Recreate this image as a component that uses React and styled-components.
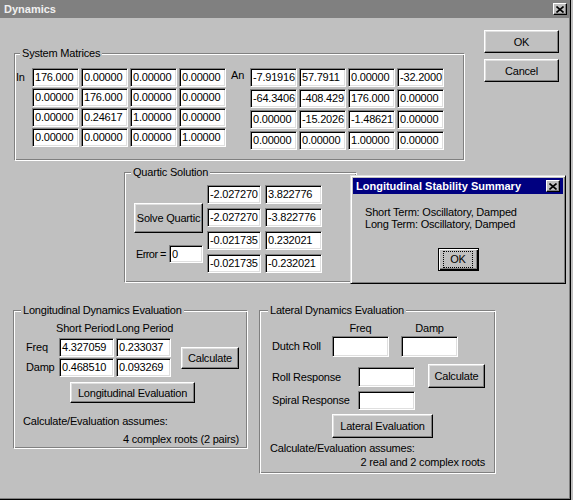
import React from "react";
import styled, { createGlobalStyle } from "styled-components";

const GlobalStyle = createGlobalStyle`
  html, body {
    margin: 0;
    padding: 0;
    background: #c0c0c0;
  }
  body {
    font-family: "Liberation Sans", Arial, sans-serif;
    font-size: 11px;
    letter-spacing: -0.2px;
    color: #000;
  }
  * {
    box-sizing: border-box;
  }
`;

const Window = styled.div`
  position: relative;
  width: 571px;
  height: 500px;
  background: #c0c0c0;
  border-right: 1px solid #000;
  border-bottom: 1px solid #000;
  box-shadow: inset -1px -1px #808080;
  overflow: hidden;
`;

const TitleBar = styled.div`
  display: flex;
  align-items: center;
  justify-content: space-between;
  height: ${(p) => p.$h || 18}px;
  padding: 0 ${(p) => p.$pr || 3}px 0 ${(p) => p.$pl || 4}px;
  background: ${(p) => (p.$active ? "#000080" : "#808080")};
  color: ${(p) => (p.$active ? "#fff" : "#f0f0f0")};
  font-weight: bold;
  font-size: 11px;
  letter-spacing: 0;
  white-space: nowrap;
`;

const CloseBox = styled.div`
  width: 14px;
  height: 12px;
  display: flex;
  align-items: center;
  justify-content: center;
  background: #c0c0c0;
  border: 1px solid;
  border-color: #fff #000 #000 #fff;
  box-shadow: inset -1px -1px #808080;
`;

const CloseButton = () => (
  <CloseBox>
    <svg width="8" height="7" viewBox="0 0 8 7">
      <path d="M0.5 0.5 L7.5 6.5 M7.5 0.5 L0.5 6.5" stroke="#000" strokeWidth="1.6" />
    </svg>
  </CloseBox>
);

const Body = styled.div`
  display: flex;
  flex-direction: column;
  align-items: flex-start;
`;

const Row = styled.div`
  display: flex;
  flex-direction: ${(p) => p.$dir || "row"};
  align-items: ${(p) => p.$align || "flex-start"};
  justify-content: ${(p) => p.$justify || "flex-start"};
  margin: ${(p) => p.$m || 0};
  gap: ${(p) => p.$gap || 0}px;
`;

const Group = styled.fieldset`
  margin: ${(p) => p.$m || 0};
  padding: 0;
  width: ${(p) => p.$w}px;
  height: ${(p) => p.$h}px;
  min-width: 0;
  border: 1px solid;
  border-color: #808080 #fff #fff #808080;
  box-shadow: inset 1px 1px #fff, inset -1px -1px #808080;
  flex-shrink: 0;
`;

const Legend = styled.legend`
  margin-left: ${(p) => p.$ml || 6}px;
  padding: 0 2px;
  line-height: 13px;
  font-size: 11px;
  background: #c0c0c0;
`;

const Content = styled.div`
  padding: ${(p) => p.$pad};
  display: flex;
  flex-direction: column;
  align-items: ${(p) => (p.$stretch ? "stretch" : "flex-start")};
`;

const Field = styled.div`
  width: ${(p) => p.$w}px;
  height: ${(p) => p.$h || 19}px;
  margin-left: ${(p) => p.$ml || 0}px;
  background: #fff;
  border: 1px solid;
  border-color: #808080 #fff #fff #808080;
  box-shadow: inset 1px 1px #000, inset -1px -1px #dfdfdf;
  padding: 0 0 0 2px;
  line-height: ${(p) => (p.$h || 19) - 2}px;
  white-space: nowrap;
  overflow: hidden;
  flex-shrink: 0;
`;

const Button = styled.div`
  width: ${(p) => p.$w}px;
  height: ${(p) => p.$h}px;
  margin: ${(p) => p.$m || 0};
  display: flex;
  align-items: center;
  justify-content: center;
  background: #c0c0c0;
  border: 1px solid;
  border-color: #fff #000 #000 #fff;
  box-shadow: inset -1px -1px #808080, inset 1px 1px #dfdfdf;
  white-space: nowrap;
  flex-shrink: 0;
  align-self: ${(p) => p.$self || "auto"};
  grid-row: ${(p) => p.$gridRow || "auto"};
  grid-column: ${(p) => p.$gridCol || "auto"};
`;

const DefaultButton = styled(Button)`
  border: 1px solid #000;
  box-shadow: inset 1px 1px #fff, inset -1px -1px #000, inset -2px -2px #808080;
`;

const FocusLabel = styled.span`
  padding: 0 5px;
  line-height: 13px;
  outline: 1px dotted #000;
  outline-offset: 1px;
`;

const ButtonColumn = styled.div`
  display: flex;
  flex-direction: column;
  gap: 6px;
  margin: ${(p) => p.$m || 0};
`;

const Label = styled.div`
  width: ${(p) => (p.$w ? `${p.$w}px` : "auto")};
  line-height: ${(p) => p.$lh || 13}px;
  padding-left: ${(p) => p.$pl || 0}px;
  text-align: ${(p) => p.$align || "left"};
  letter-spacing: ${(p) => (p.$tight ? "-0.6px" : "inherit")};
  white-space: nowrap;
  flex-shrink: 0;
  margin: ${(p) => p.$m || 0};
`;

const Matrix = styled.div`
  display: grid;
  grid-template-columns: repeat(4, 47px);
  column-gap: 2px;
  row-gap: ${(p) => p.$rowGap}px;
`;

const QuarticGrid = styled.div`
  display: grid;
  grid-template-columns: 54px 57px;
  column-gap: 4px;
  row-gap: 4px;
`;

const PairGrid = styled.div`
  display: grid;
  grid-template-columns: 34px 55px 55px auto;
  grid-template-rows: 19px 19px;
  column-gap: 2px;
  row-gap: 1px;
  margin-top: 3px;
`;

const Popup = styled.div`
  position: absolute;
  left: 350px;
  top: 175px;
  width: 216px;
  height: 109px;
  padding: 2px;
  background: #c0c0c0;
  border: 1px solid;
  border-color: #dfdfdf #000 #000 #dfdfdf;
  box-shadow: inset 1px 1px #fff, inset -1px -1px #808080;
  display: flex;
  flex-direction: column;
`;

const PopupBody = styled.div`
  display: flex;
  flex-direction: column;
  padding: 12px 0 0 12px;
  line-height: 12px;
`;

const inMatrix = [
  ["176.000", "0.00000", "0.00000", "0.00000"],
  ["0.00000", "176.000", "0.00000", "0.00000"],
  ["0.00000", "0.24617", "1.00000", "0.00000"],
  ["0.00000", "0.00000", "0.00000", "1.00000"],
];

const anMatrix = [
  ["-7.91916", "57.7911", "0.00000", "-32.2000"],
  ["-64.3406", "-408.429", "176.000", "0.00000"],
  ["0.00000", "-15.2026", "-1.48621", "0.00000"],
  ["0.00000", "0.00000", "1.00000", "0.00000"],
];

const roots = [
  ["-2.027270", "3.822776"],
  ["-2.027270", "-3.822776"],
  ["-0.021735", "0.232021"],
  ["-0.021735", "-0.232021"],
];

const MatrixBlock = ({ data, rowGap }) => (
  <Matrix $rowGap={rowGap}>
    {data.flat().map((v, i) => (
      <Field key={i} $w={47}>
        {v}
      </Field>
    ))}
  </Matrix>
);

export default function App() {
  return (
    <>
      <GlobalStyle />
      <Window>
        <TitleBar>
          <span>Dynamics</span>
          <CloseButton />
        </TitleBar>
        <Body>
          <Row>
            <Group $m="29px 0 0 14px" $w={451} $h={114}>
              <Legend $ml={5}>System Matrices</Legend>
              <Content $pad="8px 0 0 1px">
                <Row>
                  <Label $w={16} $lh={19}>In</Label>
                  <MatrixBlock data={inMatrix} rowGap={1} />
                  <Label $w={19} $lh={15} $m="0 0 0 5px">An</Label>
                  <MatrixBlock data={anMatrix} rowGap={2} />
                </Row>
              </Content>
            </Group>
            <ButtonColumn $m="12px 0 0 19px">
              <Button $w={75} $h={23}>OK</Button>
              <Button $w={75} $h={23}>Cancel</Button>
            </ButtonColumn>
          </Row>

          <Group $m="5px 0 0 124px" $w={233} $h={117}>
            <Legend $ml={6}>Quartic Solution</Legend>
            <Content $pad="6px 0 0 9px">
              <Row $gap={4}>
                <Row $dir="column">
                  <Button $w={69} $h={30} $m="18px 0 0 0">Solve Quartic</Button>
                  <Row $align="center" $m="12px 0 0 0">
                    <Label $w={35} $pl={2} $tight>Error =</Label>
                    <Field $w={34} $h={18}>0</Field>
                  </Row>
                </Row>
                <QuarticGrid>
                  {roots.flat().map((v, i) => (
                    <Field key={i} $w={i % 2 ? 57 : 54}>
                      {v}
                    </Field>
                  ))}
                </QuarticGrid>
              </Row>
            </Content>
          </Group>

          <Row $m="21px 0 0 13px" $gap={11}>
            <Group $w={235} $h={145}>
              <Legend $ml={7}>Longitudinal Dynamics Evaluation</Legend>
              <Content $pad="5px 8px 0 9px" $stretch>
                <Row $m="0 0 0 33px">
                  <Label $w={60}>Short Period</Label>
                  <Label>Long Period</Label>
                </Row>
                <PairGrid>
                  <Label $lh={19} $pl={3}>Freq</Label>
                  <Field $w={55}>4.327059</Field>
                  <Field $w={55}>0.233037</Field>
                  <Button $w={58} $h={22} $m="0 0 0 8px" $self="center" $gridRow="1 / span 2" $gridCol="4">
                    Calculate
                  </Button>
                  <Label $lh={19} $pl={3}>Damp</Label>
                  <Field $w={55}>0.468510</Field>
                  <Field $w={55}>0.093269</Field>
                </PairGrid>
                <Button $w={125} $h={21} $m="5px 0 0 47px">Longitudinal Evaluation</Button>
                <Label $m="12px 0 0 0">Calculate/Evaluation assumes:</Label>
                <Label $m="5px 0 0 0" $align="right">4 complex roots (2 pairs)</Label>
              </Content>
            </Group>

            <Group $w={237} $h={170}>
              <Legend $ml={8}>Lateral Dynamics Evaluation</Legend>
              <Content $pad="5px 10px 0 10px" $stretch>
                <Row $m="0 0 0 62px" $gap={12}>
                  <Label $w={57} $align="center">Freq</Label>
                  <Label $w={57} $align="center">Damp</Label>
                </Row>
                <Row $m="1px 0 0 0">
                  <Label $w={62} $lh={20} $pl={2}>Dutch Roll</Label>
                  <Field $w={57} $h={21} />
                  <Field $w={57} $h={21} $ml={12} />
                </Row>
                <Row $m="10px 0 0 0">
                  <Row $dir="column" $gap={4}>
                    <Row>
                      <Label $w={88} $lh={20} $pl={2}>Roll Response</Label>
                      <Field $w={57} $h={20} />
                    </Row>
                    <Row>
                      <Label $w={88} $lh={19} $pl={2}>Spiral Response</Label>
                      <Field $w={57} $h={19} />
                    </Row>
                  </Row>
                  <Button $w={57} $h={24} $m="-3px 0 0 13px">Calculate</Button>
                </Row>
                <Button $w={101} $h={24} $m="4px 0 0 62px">Lateral Evaluation</Button>
                <Label $m="4px 0 0 0">Calculate/Evaluation assumes:</Label>
                <Label $m="1px 0 0 0" $align="right">2 real and 2 complex roots</Label>
              </Content>
            </Group>
          </Row>
        </Body>

        <Popup>
          <TitleBar $active $h={16} $pl={3} $pr={3}>
            <span>Longitudinal Stability Summary</span>
            <CloseButton />
          </TitleBar>
          <PopupBody>
            <span>Short Term: Oscillatory, Damped</span>
            <span>Long Term: Oscillatory, Damped</span>
          </PopupBody>
          <Row $m="18px 0 0 0" $justify="center">
            <DefaultButton $w={41} $h={23}>
              <FocusLabel>OK</FocusLabel>
            </DefaultButton>
          </Row>
        </Popup>
      </Window>
    </>
  );
}
